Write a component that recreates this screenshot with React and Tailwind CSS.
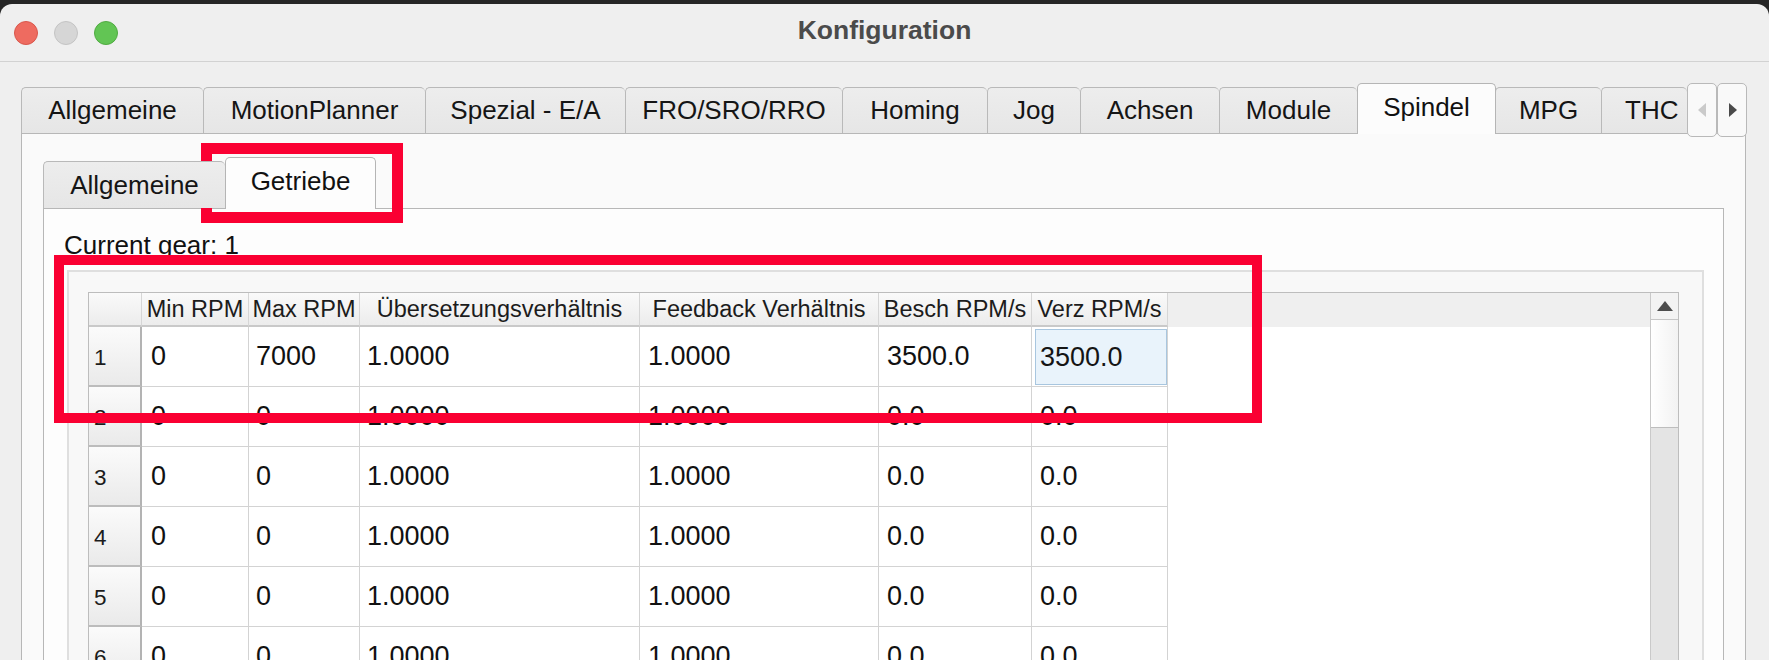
import React from "react";

const mainTabs = [
  { label: "Allgemeine", w: "w-[182px]" },
  { label: "MotionPlanner", w: "w-[222px]" },
  { label: "Spezial - E/A", w: "w-[200px]" },
  { label: "FRO/SRO/RRO", w: "w-[217px]" },
  { label: "Homing", w: "w-[145px]" },
  { label: "Jog", w: "w-[93px]" },
  { label: "Achsen", w: "w-[139px]" },
  { label: "Module", w: "w-[138px]" },
  { label: "Spindel", w: "w-[139px]", active: true },
  { label: "MPG", w: "w-[106px]" },
  { label: "THC", w: "w-[86px]", clip: true },
];

const columns = [
  { label: "Min RPM", w: "w-[107px]", pad: "pl-[9px]" },
  { label: "Max RPM", w: "w-[111px]", pad: "pl-[7px]" },
  { label: "Übersetzungsverhältnis", w: "w-[280px]", pad: "pl-[7px]" },
  { label: "Feedback Verhältnis", w: "w-[239px]", pad: "pl-[8px]" },
  { label: "Besch RPM/s", w: "w-[153px]", pad: "pl-[8px]" },
  { label: "Verz RPM/s", w: "w-[136px]", pad: "pl-[8px]" },
];

const gears = [
  ["0", "7000", "1.0000", "1.0000", "3500.0", "3500.0"],
  ["0", "0", "1.0000", "1.0000", "0.0", "0.0"],
  ["0", "0", "1.0000", "1.0000", "0.0", "0.0"],
  ["0", "0", "1.0000", "1.0000", "0.0", "0.0"],
  ["0", "0", "1.0000", "1.0000", "0.0", "0.0"],
  ["0", "0", "1.0000", "1.0000", "0.0", "0.0"],
];

function Arrow({ dir, color }) {
  return (
    <svg width="9" height="14" viewBox="0 0 9 14">
      {dir === "left" ? (
        <polygon points="8,0 8,14 0,7" fill={color} />
      ) : (
        <polygon points="1,0 1,14 9,7" fill={color} />
      )}
    </svg>
  );
}

function TitleBar() {
  return (
    <div className="h-[58px] shrink-0 border-b border-[#d2d2d2] grid grid-cols-[1fr_auto_1fr] items-center">
      <div className="flex items-center gap-[16px] pl-[14px]">
        <span className="w-[24px] h-[24px] rounded-full bg-[#ee6b60] border border-[#d9574c]" />
        <span className="w-[24px] h-[24px] rounded-full bg-[#d6d6d6] border border-[#c4c4c4]" />
        <span className="w-[24px] h-[24px] rounded-full bg-[#62c554] border border-[#50ab42]" />
      </div>
      <div className="text-[26.5px] font-bold text-[#4b4b4b] leading-none pb-[4px]">
        Konfiguration
      </div>
      <div />
    </div>
  );
}

function MainTabBar() {
  return (
    <div className="mt-[21px] ml-[21px] h-[50px] shrink-0 flex items-end relative z-10">
      {mainTabs.map((t) =>
        t.active ? (
          <div
            key={t.label}
            className={`${t.w} h-[51px] -mb-px -mr-px relative z-10 flex items-center justify-center border-x border-t border-[#b5b5b5] rounded-t-[5px] bg-[#fcfcfc] text-[26px] text-[#111] pb-[4px]`}
          >
            {t.label}
          </div>
        ) : (
          <div
            key={t.label}
            className={`${t.w} h-[46px] flex items-center ${
              t.clip ? "justify-start pl-[23px] overflow-hidden" : "justify-center"
            } border-l border-t border-[#b9b9b9] rounded-t-[5px] bg-linear-to-b from-[#ededed] to-[#e6e6e6] text-[26px] text-[#151515] whitespace-nowrap`}
          >
            {t.label}
          </div>
        )
      )}
      <div className="w-[30px] h-[54px] -mb-[4px] relative z-10 flex items-center justify-center border border-[#b9b9b9] rounded-[5px] bg-[#f9f9f9]">
        <Arrow dir="left" color="#cacaca" />
      </div>
      <div className="w-[30px] h-[54px] -mb-[4px] relative z-10 flex items-center justify-center border border-[#b9b9b9] rounded-[5px] bg-[#f9f9f9]">
        <Arrow dir="right" color="#4a4a4a" />
      </div>
    </div>
  );
}

function SubTabBar() {
  return (
    <div className="h-[51px] flex items-end relative z-10">
      <div className="w-[182px] h-[47px] flex items-center justify-center border-l border-t border-[#b9b9b9] rounded-t-[5px] bg-linear-to-b from-[#ededed] to-[#e6e6e6] text-[26px] text-[#151515]">
        Allgemeine
      </div>
      <div className="w-[151px] h-[52px] -mb-px flex items-center justify-center border-x border-t border-[#b5b5b5] rounded-t-[5px] bg-[#fdfdfd] text-[26px] text-[#111] pb-[4px]">
        Getriebe
      </div>
    </div>
  );
}

function HeaderRow() {
  return (
    <div className="h-[34px] flex">
      <div className="w-[53px] shrink-0 border-r border-b-2 border-r-[#d6d6d6] border-b-[#c9c9c9] bg-linear-to-b from-[#fafafa] to-[#ececec]" />
      {columns.map((c) => (
        <div
          key={c.label}
          className={`${c.w} shrink-0 flex items-center justify-center pt-[2px] border-r border-b-2 border-r-[#d6d6d6] border-b-[#c9c9c9] bg-linear-to-b from-[#fafafa] to-[#ececec] text-[23.5px] text-[#1c1c1c] whitespace-nowrap overflow-hidden`}
        >
          {c.label}
        </div>
      ))}
      <div className="flex-1 bg-[#efefef]" />
    </div>
  );
}

function GearRow({ index, values }) {
  return (
    <div className="h-[60px] flex">
      <div className="w-[53px] shrink-0 flex items-center pl-[5px] pt-[4px] border-r-2 border-b-2 border-r-[#b3b3b3] border-b-[#bcbcbc] bg-linear-to-b from-[#fbfbfb] to-[#eaeaea] text-[22.5px] text-[#1c1c1c]">
        {index}
      </div>
      {values.map((v, i) => {
        const col = columns[i];
        const selected = index === 1 && i === values.length - 1;
        if (selected) {
          return (
            <div
              key={i}
              className={`${col.w} shrink-0 flex pl-[3px] pt-[2px] pb-[1px] border-r border-b border-[#d3d3d3]`}
            >
              <div className="flex-1 flex items-center pl-[4px] border border-[#a8c6df] bg-[#e9f3fb] text-[27px] text-[#151515]">
                {v}
              </div>
            </div>
          );
        }
        return (
          <div
            key={i}
            className={`${col.w} shrink-0 flex items-center ${col.pad} border-r border-b border-[#d3d3d3] text-[27px] text-[#111]`}
          >
            {v}
          </div>
        );
      })}
      <div className="flex-1" />
    </div>
  );
}

function ScrollBar() {
  return (
    <div className="w-[28px] shrink-0 flex flex-col border-l border-[#c9c9c9]">
      <div className="h-[27px] shrink-0 flex items-center justify-center border-b border-[#c6c6c6] bg-[#f3f3f3]">
        <svg width="16" height="10" viewBox="0 0 16 10">
          <polygon points="0,10 16,10 8,0" fill="#4d4d4d" />
        </svg>
      </div>
      <div className="h-[108px] shrink-0 border-b border-[#bdbdbd] bg-linear-to-r from-[#ffffff] to-[#f2f2f2]" />
      <div className="flex-1 bg-[#e4e4e4]" />
    </div>
  );
}

function GearTable() {
  return (
    <div className="w-[1591px] border border-[#bdbdbd] bg-white flex">
      <div className="flex-1 flex flex-col">
        <HeaderRow />
        {gears.map((g, i) => (
          <GearRow key={i} index={i + 1} values={g} />
        ))}
      </div>
      <ScrollBar />
    </div>
  );
}

export default function App() {
  return (
    <div className="w-[1769px] h-[660px] overflow-hidden bg-[#262626] pt-[4px] relative font-['Liberation_Sans',Arial,sans-serif]">
      <div className="h-[656px] rounded-t-[12px] bg-[#efefef] overflow-hidden flex flex-col">
        <TitleBar />
        <MainTabBar />
        <div className="ml-[21px] w-[1725px] shrink-0 border border-[#b7b7b7] bg-[#fafafa] px-[21px] pt-[23px]">
          <SubTabBar />
          <div className="border border-[#b7b7b7] bg-[#fdfdfd]">
            <div className="pl-[20px] pt-[21px] h-[61px] text-[26px] text-[#111] leading-[30px]">
              Current gear: 1
            </div>
            <div className="ml-[23px] mr-[19px] border-2 border-[#dfdfdf] bg-[#f8f8f8] pl-[19px] pt-[20px] pr-[23px]">
              <GearTable />
            </div>
          </div>
        </div>
      </div>

      {/* highlight frames drawn over the dialog */}
      <div className="absolute left-[201px] top-[143px] w-[202px] h-[80px] border-[11px] border-[#fa0032]" />
      <div className="absolute left-[54px] top-[255px] w-[1208px] h-[168px] border-[10px] border-[#fa0032]" />
    </div>
  );
}
